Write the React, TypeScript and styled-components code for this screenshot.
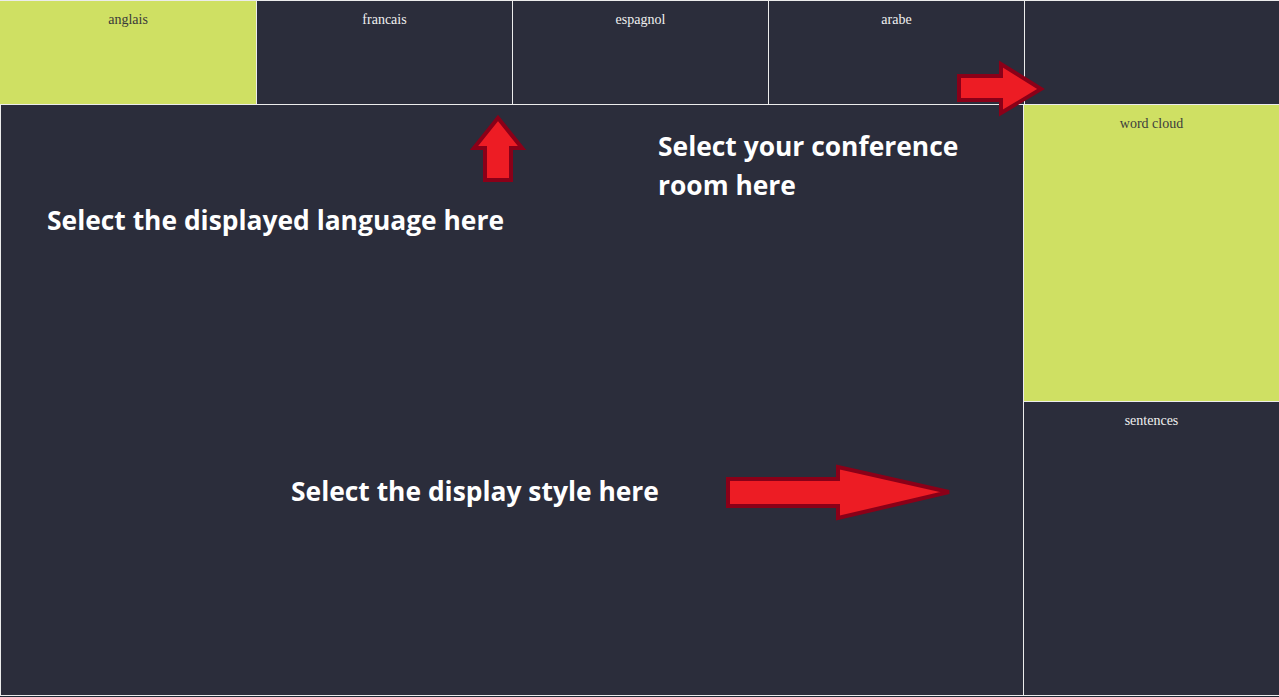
import React from "react";
import styled, { createGlobalStyle } from "styled-components";

const Global = createGlobalStyle`
  html, body { margin: 0; padding: 0; background: #1d2a36; }
  body { font-family: "Liberation Serif", serif; }
`;

const Page = styled.div`
  position: relative;
  width: 1279px;
  height: 696px;
  background: #ececec;
  display: grid;
  grid-template-columns: 1023px 255px;
  grid-template-rows: 103px 296px 293px;
  column-gap: 1px;
  row-gap: 1px;
  padding-top: 1px;
  box-sizing: border-box;
  overflow: hidden;
`;

const TabBar = styled.div`
  grid-column: 1 / span 2;
  display: grid;
  grid-template-columns: 256px 255px 255px 255px 255px;
  column-gap: 1px;
`;

const Tab = styled.div<{ $active?: boolean }>`
  background: ${(p) => (p.$active ? "#cfe063" : "#2b2d3b")};
  color: ${(p) => (p.$active ? "#3a3a3a" : "#f0f0f0")};
  font-size: 14px;
  text-align: center;
  padding-top: 11px;
`;

const Main = styled.div`
  grid-column: 1;
  grid-row: 2 / span 2;
  background: #2b2d3b;
  margin-left: 1px;
`;

const SidePanel = styled.div<{ $active?: boolean }>`
  background: ${(p) => (p.$active ? "#cfe063" : "#2b2d3b")};
  color: ${(p) => (p.$active ? "#3d3d3d" : "#f0f0f0")};
  font-size: 14px;
  text-align: center;
  padding-top: 11px;
`;

const Note = styled.div<{ $x: number; $y: number }>`
  position: absolute;
  left: ${(p) => p.$x}px;
  top: ${(p) => p.$y}px;
  font-family: "Open Sans", sans-serif;
  font-weight: 700;
  font-size: 26.4px;
  line-height: 39px;
  color: #ffffff;
  white-space: nowrap;
`;

const ArrowSvg = styled.svg<{ $x: number; $y: number }>`
  position: absolute;
  left: ${(p) => p.$x}px;
  top: ${(p) => p.$y}px;
  overflow: visible;
`;

const ARROW_FILL = "#ed1c24";
const ARROW_STROKE = "#8a0018";

export default function App() {
  return (
    <>
      <Global />
      <Page>
        <TabBar>
          <Tab $active>anglais</Tab>
          <Tab>francais</Tab>
          <Tab>espagnol</Tab>
          <Tab>arabe</Tab>
          <Tab />
        </TabBar>
        <Main />
        <SidePanel $active>word cloud</SidePanel>
        <SidePanel>sentences</SidePanel>

        <Note $x={47} $y={201}>Select the displayed language here</Note>
        <Note $x={658} $y={127}>
          Select your conference
          <br />
          room here
        </Note>
        <Note $x={291} $y={472}>Select the display style here</Note>

        <ArrowSvg $x={0} $y={0} width="1279" height="696">
          <polygon
            points="959,76 1001,76 1001,64 1041,89 1001,113 1001,100 959,100"
            fill={ARROW_FILL}
            stroke={ARROW_STROKE}
            strokeWidth="4"
            strokeLinejoin="miter"
          />
          <polygon
            points="498,118 522,148 511,148 511,180 485,180 485,148 474,148"
            fill={ARROW_FILL}
            stroke={ARROW_STROKE}
            strokeWidth="4"
          />
          <polygon
            points="728,479 838,479 838,467 949,492 838,518 838,506 728,506"
            fill={ARROW_FILL}
            stroke={ARROW_STROKE}
            strokeWidth="4"
          />
        </ArrowSvg>
      </Page>
    </>
  );
}
